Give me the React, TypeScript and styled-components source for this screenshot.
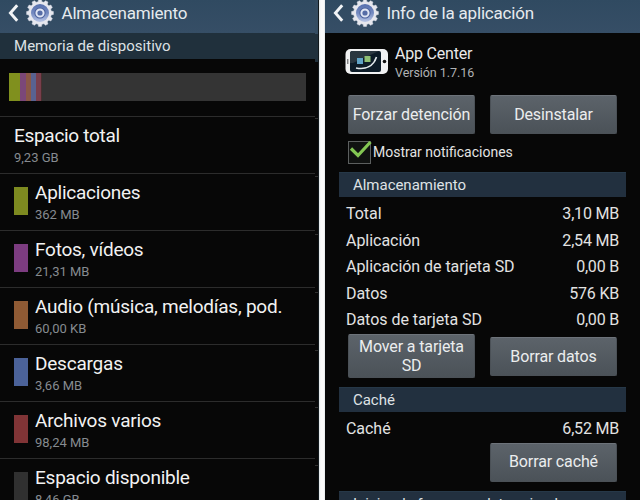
import React from 'react';
import styled, { createGlobalStyle } from 'styled-components';

const GlobalStyle = createGlobalStyle`
  * { box-sizing: border-box; }
  html, body { margin: 0; padding: 0; background: #050505; overflow: hidden; }
  body { font-family: Roboto, "Liberation Sans", sans-serif; color: #ededed; }
`;

const Screen = styled.div`
  width: 640px;
  height: 500px;
  overflow: hidden;
  display: grid;
  grid-template-columns: 315px 4px 6px 315px;
  background: #070707;
`;

const Panel = styled.section`
  height: 500px;
  overflow: hidden;
  display: flex;
  flex-direction: column;
`;

const Divider = styled.div`
  background: linear-gradient(90deg, #dfe5e7, #fafafa 30%, #fafafa 75%, #e3e8ea);
`;

const TopBar = styled.header`
  flex: none;
  height: 33px;
  display: flex;
  background: linear-gradient(#304a61, #364e66);
`;

const BarTitle = styled.h1<{ $spacing: number }>`
  margin: 1px 0 0 7.5px;
  font-size: 17px;
  line-height: 25px;
  font-weight: 400;
  letter-spacing: ${(p) => p.$spacing}px;
  color: #e6eaee;
  white-space: nowrap;
`;

const BackIcon = styled.svg`
  flex: none;
  width: 11px;
  height: 18px;
  margin: 4px 0 0 8px;
`;

const GearIcon = styled.svg`
  flex: none;
  width: 28px;
  height: 28px;
  margin: -1px 0 0 7px;
`;

const MemoryHeading = styled.h2`
  flex: none;
  margin: 0;
  height: 26px;
  padding-left: 14px;
  background: #20303c;
  font-size: 15px;
  line-height: 27px;
  font-weight: 400;
  letter-spacing: 0.03px;
  color: #dde1e4;
`;

const UsageArea = styled.div`
  flex: none;
  height: 56.6px;
  padding: 14px 9px 0 9px;
`;

const UsageBar = styled.div`
  height: 28px;
  width: 297px;
  display: flex;
  background: #343434;
`;

const Segment = styled.span<{ $color: string; $width: number }>`
  width: ${(p) => p.$width}px;
  background: ${(p) => p.$color};
`;

const StorageRow = styled.div`
  flex: none;
  height: 57px;
  padding: 0 0 0 14px;
  border-top: 1px solid #2c2c2c;
  display: flex;
`;

const Swatch = styled.span<{ $color: string }>`
  width: 14px;
  height: 28px;
  margin: 13px 7px 0 0;
  background: ${(p) => p.$color};
`;

const StorageTitle = styled.div<{ $spacing: number }>`
  padding-top: 7px;
  font-size: 19px;
  line-height: 24px;
  letter-spacing: ${(p) => p.$spacing}px;
  color: #f2f2f2;
  white-space: nowrap;
`;

const StorageValue = styled.div`
  margin-top: 2px;
  font-size: 13px;
  line-height: 15px;
  color: #868b90;
`;

const EdgeStrip = styled.div`
  height: 500px;
  display: flex;
  flex-direction: column;
  overflow: hidden;
  border-right: 1px solid #11181c;
`;

const EdgeTop = styled.div`
  flex: none;
  height: 34px;
  background: #344c62;
`;

const EdgeHeading = styled.div`
  flex: none;
  height: 28px;
  background: #20303c;
`;

const EdgeGap = styled.div`
  flex: none;
  height: 56px;
`;

const EdgeRow = styled.div`
  flex: none;
  height: 57.9px;
  border-top: 1px solid #303030;
`;

const AppSummary = styled.div`
  flex: none;
  height: 62px;
  display: flex;
  padding: 15px 0 0 20px;
`;

const AppIcon = styled.svg`
  width: 44px;
  height: 27px;
`;

const AppText = styled.div`
  margin: -4px 0 0 6px;
`;

const AppName = styled.div`
  font-size: 16px;
  line-height: 20px;
  letter-spacing: -0.2px;
  color: #eaeaea;
`;

const AppVersion = styled.div`
  font-size: 12.5px;
  line-height: 17px;
  letter-spacing: -0.05px;
  color: #b0b2b4;
`;

const ButtonRow = styled.div<{ $height: number }>`
  flex: none;
  height: ${(p) => p.$height}px;
  padding: 0 23px;
  display: flex;
  align-items: center;
  justify-content: space-between;
`;

const ActionButton = styled.button<{ $height?: number; $end?: boolean }>`
  width: 127px;
  height: ${(p) => p.$height ?? 39}px;
  margin-left: ${(p) => (p.$end ? 'auto' : '0')};
  padding: 1px 0 0 0;
  border: 1px solid #4b5157;
  border-top-color: #6d737a;
  border-radius: 2px;
  background: linear-gradient(#5c636a, #4b5258);
  font-family: inherit;
  font-size: 16px;
  line-height: 18.5px;
  letter-spacing: -0.13px;
  color: #ebedee;
`;

const CheckRow = styled.label`
  flex: none;
  height: 38px;
  padding: 6px 0 0 23px;
  display: flex;
  font-size: 14px;
  line-height: 25px;
  color: #e4e4e4;
`;

const CheckIcon = styled.svg`
  width: 25px;
  height: 25px;
  margin-top: -1px;
`;

const SectionHeading = styled.h2`
  flex: none;
  margin: 0 14px 0 14px;
  height: 25px;
  padding-left: 14px;
  background: #22303f;
  border-top: 1px solid #263848;
  font-size: 15px;
  line-height: 25px;
  font-weight: 400;
  letter-spacing: -0.03px;
  color: #dfe2e5;
  white-space: nowrap;
`;

const DataList = styled.dl`
  flex: none;
  margin: 0;
  padding: 4px 21px 0 21px;
`;

const DataRow = styled.div`
  height: 26.6px;
  display: flex;
  justify-content: space-between;
  font-size: 16px;
  line-height: 26px;
  color: #e2e2e2;
`;

const Label = styled.dt`
  letter-spacing: -0.04px;
`;

const Value = styled.dd`
  margin: 0;
  letter-spacing: -0.2px;
`;

const Spacer = styled.div<{ $height: number }>`
  flex: none;
  height: ${(p) => p.$height}px;
`;

const toothCount = 12;
const gearPath =
  Array.from({ length: toothCount }, (_, i) => {
    const step = (Math.PI * 2) / toothCount;
    const base = i * step;
    return [
      [-0.32, 11.4],
      [-0.21, 13.5],
      [0.21, 13.5],
      [0.32, 11.4],
    ]
      .map(([offset, radius], j) => {
        const angle = base + offset * step;
        const x = 14 + Math.sin(angle) * radius;
        const y = 14 - Math.cos(angle) * radius;
        return `${i === 0 && j === 0 ? 'M' : 'L'}${x.toFixed(2)} ${y.toFixed(2)}`;
      })
      .join('');
  }).join('') + 'Z';

function Gear({ id }: { id: string }) {
  return (
    <GearIcon viewBox="0 0 28 28">
      <defs>
        <linearGradient id={id} x1="0" y1="0" x2="0" y2="1">
          <stop offset="0" stopColor="#566fae" />
          <stop offset="0.5" stopColor="#7389c0" />
          <stop offset="1" stopColor="#b9c6e6" />
        </linearGradient>
      </defs>
      <path d={gearPath} fill="#e6e7ee" strokeLinejoin="round" stroke="#d5d9e5" strokeWidth="0.5" />
      <circle cx="14" cy="14" r="9" fill={`url(#${id})`} />
      <circle cx="14" cy="14" r="5.6" fill="#4b609c" />
      <circle cx="14" cy="14" r="3.6" fill="#566ca6" stroke="#dfe5f4" strokeWidth="2" />
    </GearIcon>
  );
}

function Header({ title, id, spacing }: { title: string; id: string; spacing: number }) {
  return (
    <TopBar>
      <BackIcon viewBox="0 0 11 18">
        <path d="M9.2 1.2 2.4 9l6.8 7.8" fill="none" stroke="#f2f4f6" strokeWidth="2.9" />
      </BackIcon>
      <Gear id={id} />
      <BarTitle $spacing={spacing}>{title}</BarTitle>
    </TopBar>
  );
}

const segments = [
  { color: '#80901e', width: 11 },
  { color: '#7b4778', width: 6 },
  { color: '#8b5846', width: 5 },
  { color: '#596290', width: 5 },
  { color: '#793e4c', width: 5 },
  { color: '#49302f', width: 1 },
];

const storage = [
  { title: 'Espacio total', value: '9,23 GB', spacing: -0.3 },
  { title: 'Aplicaciones', value: '362 MB', color: '#7d8a20', spacing: -0.25 },
  { title: 'Fotos, vídeos', value: '21,31 MB', color: '#7c3c80', spacing: -0.25 },
  { title: 'Audio (música, melodías, pod.', value: '60,00 KB', color: '#8f5a34', spacing: -0.23 },
  { title: 'Descargas', value: '3,66 MB', color: '#4b6299', spacing: -0.22 },
  { title: 'Archivos varios', value: '98,24 MB', color: '#803436', spacing: -0.2 },
  { title: 'Espacio disponible', value: '8,46 GB', color: '#303030', spacing: -0.23 },
];

const appData = [
  { label: 'Total', value: '3,10 MB' },
  { label: 'Aplicación', value: '2,54 MB' },
  { label: 'Aplicación de tarjeta SD', value: '0,00 B' },
  { label: 'Datos', value: '576 KB' },
  { label: 'Datos de tarjeta SD', value: '0,00 B' },
];

export default function App() {
  return (
    <>
      <GlobalStyle />
      <Screen>
        <Panel>
          <Header title="Almacenamiento" id="gear-storage" spacing={-0.2} />
          <MemoryHeading>Memoria de dispositivo</MemoryHeading>
          <UsageArea>
            <UsageBar>
              {segments.map((s) => (
                <Segment key={s.color} $color={s.color} $width={s.width} />
              ))}
            </UsageBar>
          </UsageArea>
          {storage.map((item) => (
            <StorageRow key={item.title}>
              {item.color && <Swatch $color={item.color} />}
              <div>
                <StorageTitle $spacing={item.spacing}>{item.title}</StorageTitle>
                <StorageValue>{item.value}</StorageValue>
              </div>
            </StorageRow>
          ))}
        </Panel>
        <EdgeStrip>
          <EdgeTop />
          <EdgeHeading />
          <EdgeGap />
          {storage.map((item) => (
            <EdgeRow key={item.title} />
          ))}
        </EdgeStrip>
        <Divider />
        <Panel>
          <Header title="Info de la aplicación" id="gear-app" spacing={-0.2} />
          <AppSummary>
            <AppIcon viewBox="0 0 44 27">
              <rect x="0.5" y="1" width="42.5" height="25" rx="5" fill="#f1f2f3" />
              <rect x="5" y="3" width="31" height="21" rx="2" fill="#0d1c28" />
              <path d="M7 3h27L8 15H5V5Z" fill="#2a3740" />
              <rect x="12" y="10" width="6" height="6" fill="#5fa3c6" />
              <rect x="19.5" y="8" width="6" height="6" fill="#8fbf74" />
              <path d="M11 20C21 22 28.500 18 31.500 9" fill="none" stroke="#e3eaed" strokeWidth="1.6" />
              <circle cx="39.500" cy="13.500" r="1.8" fill="#111" />
              <path d="M2.800 11v5" stroke="#555" strokeWidth="1" />
            </AppIcon>
            <AppText>
              <AppName>App Center</AppName>
              <AppVersion>Versión 1.7.16</AppVersion>
            </AppText>
          </AppSummary>
          <ButtonRow $height={39}>
            <ActionButton>Forzar detención</ActionButton>
            <ActionButton>Desinstalar</ActionButton>
          </ButtonRow>
          <CheckRow>
            <CheckIcon viewBox="0 0 25 25">
              <rect x="0.5" y="2.5" width="22" height="22" fill="#101211" stroke="#5c5f5f" />
              <path d="M3 9.500 10 16.500 22.500 3" fill="none" stroke="#83c653" strokeWidth="3.2" />
            </CheckIcon>
            Mostrar notificaciones
          </CheckRow>
          <SectionHeading>Almacenamiento</SectionHeading>
          <DataList>
            {appData.map((d) => (
              <DataRow key={d.label}>
                <Label>{d.label}</Label>
                <Value>{d.value}</Value>
              </DataRow>
            ))}
          </DataList>
          <ButtonRow $height={45}>
            <ActionButton $height={44}>Mover a tarjeta SD</ActionButton>
            <ActionButton>Borrar datos</ActionButton>
          </ButtonRow>
          <Spacer $height={8} />
          <SectionHeading>Caché</SectionHeading>
          <DataList>
            <DataRow>
              <Label>Caché</Label>
              <Value>6,52 MB</Value>
            </DataRow>
          </DataList>
          <ButtonRow $height={39}>
            <ActionButton $end>Borrar caché</ActionButton>
          </ButtonRow>
          <Spacer $height={9} />
          <SectionHeading>Iniciar de forma predeterminada</SectionHeading>
        </Panel>
      </Screen>
    </>
  );
}
